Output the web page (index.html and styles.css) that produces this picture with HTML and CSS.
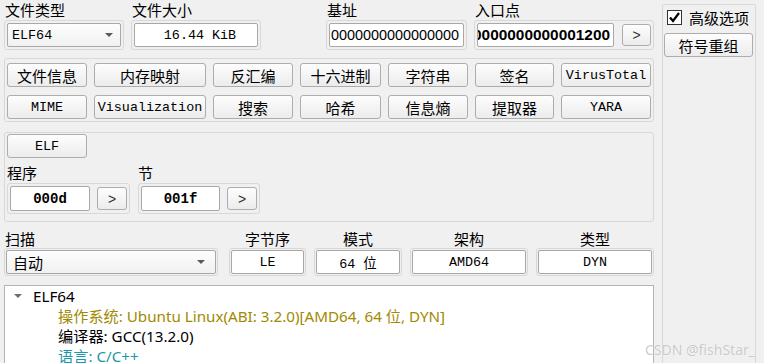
FILE: index.html
```html
<!DOCTYPE html>
<html lang="zh-CN">
<head>
  <meta charset="UTF-8" />
  <title>Detect It Easy</title>
  <link rel="stylesheet" href="styles.css">
</head>
<body>
  <div class="app">
    <div class="main">
      <div class="top">
        <div class="field w-type">
          <span class="lbl">文件类型</span>
          <div class="well"><div class="combo mono">ELF64<i class="arrow"></i></div></div>
        </div>
        <div class="field w-size">
          <span class="lbl">文件大小</span>
          <div class="well"><div class="edit mono">16.44 KiB</div></div>
        </div>
        <div class="field w-base">
          <span class="lbl">基址</span>
          <div class="well"><div class="edit base">0000000000000000</div></div>
        </div>
        <div class="field w-entry">
          <span class="lbl">入口点</span>
          <div class="well pair">
            <div class="edit entry">0000000000001200</div>
            <button class="btn arrow-btn">&gt;</button>
          </div>
        </div>
      </div>

      <div class="group tools">
        <button class="btn">文件信息</button>
        <button class="btn">内存映射</button>
        <button class="btn">反汇编</button>
        <button class="btn">十六进制</button>
        <button class="btn">字符串</button>
        <button class="btn">签名</button>
        <button class="btn mono">VirusTotal</button>
        <button class="btn mono">MIME</button>
        <button class="btn mono">Visualization</button>
        <button class="btn">搜索</button>
        <button class="btn">哈希</button>
        <button class="btn">信息熵</button>
        <button class="btn">提取器</button>
        <button class="btn mono">YARA</button>
      </div>

      <div class="group elf">
        <button class="btn mono elf-btn">ELF</button>
        <div class="sub">
          <div class="field w-prog">
            <span class="lbl">程序</span>
            <div class="well pair">
              <div class="edit num">000d</div>
              <button class="btn arrow-btn">&gt;</button>
            </div>
          </div>
          <div class="field w-sect">
            <span class="lbl">节</span>
            <div class="well pair">
              <div class="edit num">001f</div>
              <button class="btn arrow-btn">&gt;</button>
            </div>
          </div>
        </div>
      </div>

      <div class="scan">
        <div class="col c-scan">
          <span class="lbl">扫描</span>
          <div class="well thin"><div class="combo">自动<i class="arrow"></i></div></div>
        </div>
        <div class="col c-end">
          <span class="lbl mid">字节序</span>
          <div class="well thin"><div class="edit mono">LE</div></div>
        </div>
        <div class="col c-mode">
          <span class="lbl mid">模式</span>
          <div class="well thin"><div class="edit mono">64 位</div></div>
        </div>
        <div class="col c-arch">
          <span class="lbl mid">架构</span>
          <div class="well thin"><div class="edit mono">AMD64</div></div>
        </div>
        <div class="col c-type">
          <span class="lbl mid">类型</span>
          <div class="well thin"><div class="edit mono">DYN</div></div>
        </div>
      </div>

      <div class="tree">
        <div class="node root"><i class="twisty"></i>ELF64</div>
        <div class="node leaf os">操作系统: Ubuntu Linux(ABI: 3.2.0)[AMD64, 64 位, DYN]</div>
        <div class="node leaf">编译器: GCC(13.2.0)</div>
        <div class="node leaf lang">语言: C/C++</div>
      </div>
    </div>

    <div class="side">
      <label class="chk">
        <span class="box">
          <svg width="13" height="13" viewBox="0 0 13 13"><path d="M2 6.5 L5 10 L11 2" fill="none" stroke="#000" stroke-width="2.2"/></svg>
        </span>
        高级选项
      </label>
      <button class="btn side-btn">符号重组</button>
    </div>
  </div>
  <div class="mark">CSDN @fishStar_</div>
</body>
</html>
```

FILE: styles.css
```css
* {
  box-sizing: border-box;
}
body {
  margin: 0;
  background: #f0f0f0;
  font-family: "Noto Sans CJK SC", sans-serif;
  font-size: 15px;
  color: #000;
  overflow: hidden;
}
.app {
  display: flex;
  height: 363px;
}
.main {
  width: 654px;
  padding-left: 4px;
  flex: none;
}
.mono {
  font-family: "Liberation Mono", "Noto Sans CJK SC", monospace;
  font-size: 13.4px;
}
.lbl {
  display: block;
  height: 20px;
  line-height: 20px;
  padding-left: 1px;
  white-space: nowrap;
}
.lbl.mid {
  text-align: center;
  padding-left: 0;
}
.well {
  border: 1px solid #d8d8d8;
  border-radius: 3px;
  padding: 2px;
}
.well.thin {
  padding: 1px;
}
.well.pair {
  display: flex;
  align-items: center;
  gap: 7px;
}
.edit {
  height: 24px;
  background: #fff;
  border: 1px solid #a8a8a8;
  border-radius: 2px;
  display: flex;
  align-items: center;
  justify-content: center;
  overflow: hidden;
  white-space: nowrap;
}
.combo {
  height: 24px;
  border: 1px solid #a8a8a8;
  border-radius: 2px;
  background: linear-gradient(#fdfdfd, #f1f1f1);
  display: flex;
  align-items: center;
  padding: 0 7px 0 4px;
  white-space: nowrap;
}
.combo .arrow {
  margin-left: auto;
  border-left: 4px solid transparent;
  border-right: 4px solid transparent;
  border-top: 4px solid #5a5a5a;
}
.btn {
  font-family: "Noto Sans CJK SC", sans-serif;
  font-size: 15px;
  color: #000;
  height: 24px;
  padding: 0;
  border: 1px solid #adadad;
  border-radius: 3px;
  background: linear-gradient(#fdfdfd, #ececec);
  display: flex;
  align-items: center;
  justify-content: center;
  white-space: nowrap;
}
.btn.mono {
  font-family: "Liberation Mono", monospace;
  font-size: 13.4px;
}
.arrow-btn {
  flex: none;
  height: 23px;
  font-family: "Liberation Sans", sans-serif;
  font-size: 14px;
  color: #333;
}

/* top row */
.top {
  display: flex;
}
.w-type { width: 120px; }
.w-size { width: 130px; margin-left: 7px; }
.w-base { width: 141px; margin-left: 65px; }
.w-entry { width: 180px; margin-left: 7px; }
.w-size .edit {
  padding-left: 8px;
}
.edit.base {
  justify-content: flex-start;
  padding-left: 1px;
  font-family: "Liberation Sans", sans-serif;
  font-size: 14.4px;
}
.edit.entry {
  width: 137px;
  flex: none;
  justify-content: flex-end;
  padding-right: 3px;
  font-family: "Liberation Sans", sans-serif;
  font-weight: bold;
  font-size: 15.4px;
}
.w-entry .arrow-btn {
  width: 29px;
  height: 22px;
  margin-left: 1px;
}

/* tool buttons */
.group {
  border: 1px solid #d8d8d8;
  border-radius: 3px;
}
.tools {
  margin-top: 8px;
  display: grid;
  grid-template-columns: 80px 112px 80px 81px 80px 79px 90px;
  gap: 8px 7px;
  padding: 4px 1px 2px 2px;
}

/* ELF group */
.elf {
  margin-top: 10px;
  padding: 1px 2px 7px 2px;
}
.elf-btn {
  width: 80px;
}
.sub {
  display: flex;
  margin-top: 5px;
}
.w-prog { width: 123px; }
.w-sect { width: 122px; margin-left: 8px; }
.w-prog .lbl, .w-sect .lbl {
  padding-left: 0;
}
.edit.num {
  height: 25px;
  flex: none;
  font-family: "Liberation Mono", monospace;
  font-weight: bold;
  font-size: 14px;
}
.w-prog .edit.num { width: 80px; }
.w-sect .edit.num { width: 79px; }
.elf .arrow-btn { width: 30px; }

/* scan row */
.scan {
  display: flex;
  margin-top: 8px;
}
.scan .lbl {
  height: 18px;
  line-height: 18px;
}
.c-scan { width: 214px; }
.c-end { width: 77px; margin-left: 11px; }
.c-mode { width: 88px; margin-left: 8px; }
.c-arch { width: 118px; margin-left: 8px; }
.c-type { width: 118px; margin-left: 8px; }
.c-scan .combo {
  padding-left: 6px;
  padding-right: 10px;
}

/* tree */
.tree {
  margin-top: 9px;
  height: 100px;
  background: #fff;
  border: 1px solid #b4b4b4;
  font-family: "Noto Sans", "Noto Sans CJK SC", sans-serif;
  font-size: 15.2px;
}
.node {
  height: 20px;
  line-height: 20px;
  white-space: nowrap;
}
.root {
  display: flex;
  align-items: center;
  padding-left: 9px;
}
.twisty {
  width: 0;
  height: 0;
  border-left: 4px solid transparent;
  border-right: 4px solid transparent;
  border-top: 4px solid #6e6e6e;
  margin-right: 11px;
}
.leaf {
  padding-left: 53px;
}
.os { color: #a08a00; }
.lang { color: #1a97a8; }

/* right panel */
.side {
  width: 94px;
  margin-left: 8px;
  margin-top: 4px;
  height: 400px;
  flex: none;
  border: 1px solid #d8d8d8;
  border-radius: 2px;
  padding: 5px 1px;
}
.chk {
  display: flex;
  align-items: center;
  height: 15px;
  padding-left: 3px;
  white-space: nowrap;
}
.chk .box {
  width: 15px;
  height: 15px;
  border: 1px solid #333;
  background: #fff;
  display: flex;
  align-items: center;
  justify-content: center;
  margin-right: 7px;
}
.side-btn {
  width: 89px;
  margin-top: 8px;
}

.mark {
  position: absolute;
  right: 9px;
  bottom: 4px;
  font-family: "Noto Sans", sans-serif;
  font-size: 14px;
  color: rgba(160, 160, 160, 0.55);
  text-shadow: 0 0 1px #fff;
}
```
